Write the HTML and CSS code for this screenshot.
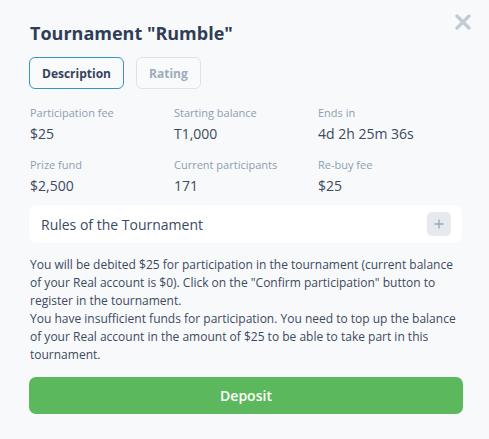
FILE: index.html
```html
<!DOCTYPE html>
<html>
<head>
<meta charset="utf-8">
<link rel="stylesheet" href="styles.css">
</head>
<body>
<div class="modal">
  <button class="close" aria-label="Close">
    <svg width="16" height="16" viewBox="0 0 16 16"><path d="M2 2 L14 14 M14 2 L2 14" stroke="#c3cad3" stroke-width="3.2" stroke-linecap="round"/></svg>
  </button>
  <h1 class="title">Tournament "Rumble"</h1>
  <div class="tabs">
    <button class="tab active">Description</button>
    <button class="tab">Rating</button>
  </div>
  <div class="info">
    <div class="cell"><div class="label">Participation fee</div><div class="value">$25</div></div>
    <div class="cell"><div class="label">Starting balance</div><div class="value">T1,000</div></div>
    <div class="cell"><div class="label">Ends in</div><div class="value">4d 2h 25m 36s</div></div>
    <div class="cell"><div class="label">Prize fund</div><div class="value">$2,500</div></div>
    <div class="cell"><div class="label">Current participants</div><div class="value">171</div></div>
    <div class="cell"><div class="label">Re-buy fee</div><div class="value">$25</div></div>
  </div>
  <div class="rules">
    <span>Rules of the Tournament</span>
    <span class="plus">
      <svg width="10" height="10" viewBox="0 0 10 10"><path d="M5 0.5 V9.5 M0.5 5 H9.5" stroke="#9aa6b4" stroke-width="1.3"/></svg>
    </span>
  </div>
  <p class="text">You will be debited $25 for participation in the tournament (current balance of your Real account is $0). Click on the "Confirm participation" button to register in the tournament.<br>You have insufficient funds for participation. You need to top up the balance of your Real account in the amount of $25 to be able to take part in this tournament.</p>
  <button class="deposit">Deposit</button>
</div>
</body>
</html>
```
FILE: styles.css
```css
* { box-sizing: border-box; }
html, body { margin: 0; padding: 0; }
body {
  background: #f8f9fa;
  font-family: "Open Sans", "Noto Sans", sans-serif;
  color: #3b4a5e;
  width: 489px;
  height: 439px;
  overflow: hidden;
}
.modal {
  position: relative;
  padding: 20px 27px 0 29px;
}
.close {
  position: absolute;
  top: 14px;
  right: 18px;
  border: 0;
  background: none;
  padding: 0;
  width: 16px;
  height: 16px;
}
.close svg { display: block; }
.title {
  margin: 0 0 0 1px;
  font-size: 18px;
  font-weight: 700;
  line-height: 26px;
  color: #2f3e56;
}
.tabs {
  display: flex;
  gap: 12px;
  margin-top: 11px;
}
.tab {
  font-family: inherit;
  font-size: 12px;
  font-weight: 700;
  height: 32px;
  padding: 0 12px;
  border-radius: 6px;
  background: #f9fafb;
  border: 1px solid #dfe3e8;
  color: #9eabbb;
}
.tab.active {
  border-color: #3b93c4;
  color: #34445a;
}
.info {
  display: grid;
  grid-template-columns: 144px 144px 144px;
  row-gap: 12px;
  margin-top: 15px;
  padding-left: 1px;
}
.label {
  font-size: 11px;
  line-height: 18px;
  color: #8e9db0;
}
.value {
  font-size: 14px;
  line-height: 20px;
  margin-top: 2px;
  color: #3b4a5e;
}
.rules {
  margin-top: 9px;
  background: #ffffff;
  border-radius: 8px;
  height: 38px;
  display: flex;
  align-items: center;
  justify-content: space-between;
  padding: 0 11px 0 12px;
  font-size: 14px;
  color: #3b4a5e;
}
.plus {
  width: 24px;
  height: 24px;
  border-radius: 5px;
  background: #e6e9ed;
  display: flex;
  align-items: center;
  justify-content: center;
}
.plus svg { display: block; }
.text {
  margin: 13px 0 0 1px;
  font-size: 12px;
  line-height: 18px;
  color: #3b4a5e;
}
.deposit {
  display: block;
  width: 434px;
  height: 37px;
  margin-top: 13px;
  border: 0;
  border-radius: 7px;
  background: #5cb85c;
  color: #ffffff;
  font-family: inherit;
  font-size: 14px;
  font-weight: 600;
}
```
